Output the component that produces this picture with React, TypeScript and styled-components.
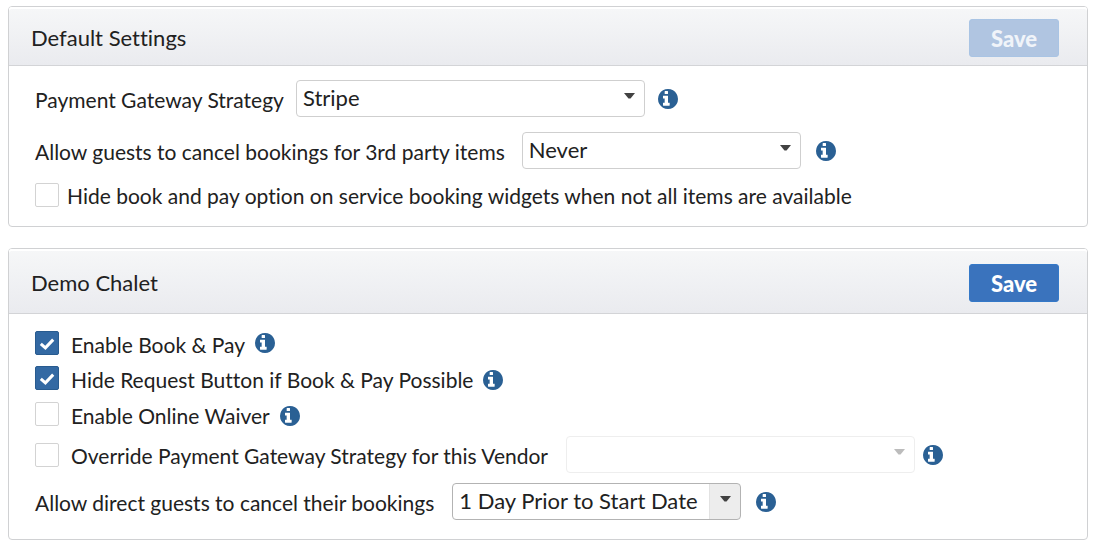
import React, { useState } from "react";
import styled, { createGlobalStyle, css } from "styled-components";

const GlobalStyle = createGlobalStyle`
  *, *::before, *::after { box-sizing: border-box; }
  body {
    margin: 0;
    background: #fff;
    color: #212121;
    font-family: Lato, "Liberation Sans", sans-serif;
    font-size: 22px;
    line-height: 28px;
    font-variant-ligatures: none;
  }
`;

const Page = styled.main`
  display: flex;
  flex-direction: column;
  gap: 21px;
  padding: 6px 7px 4px 8px;
`;

const Card = styled.section`
  border: 1px solid #d0d1d3;
  border-radius: 4px;
  background: #fff;
`;

const CardHeader = styled.header<{ $tall?: boolean }>`
  display: flex;
  align-items: center;
  justify-content: space-between;
  height: ${(p) => (p.$tall ? 65 : 59)}px;
  padding: 4px 28px 0 22px;
  border-bottom: 1px solid #d3d4d7;
  border-radius: 3px 3px 0 0;
  background: linear-gradient(#f6f7f8, #eaebef);
  box-shadow: inset 0 2px 0 #fff;
`;

const Title = styled.h2`
  margin: 0;
  font-size: 22px;
  font-weight: 400;
`;

const SaveButton = styled.button`
  width: 90px;
  height: 38px;
  padding: 2px 0 0;
  border: 1px solid #3579c8;
  border-radius: 3px;
  background: #3a73bd;
  color: #fff;
  font: 900 22px/28px Lato, "Liberation Sans", sans-serif;
  cursor: pointer;

  &:disabled {
    border-color: #a9c4e4;
    background: #b0c5e1;
    color: #f0f4f9;
    cursor: default;
  }
`;

const CardBody = styled.div<{ $top: number; $bottom: number }>`
  display: flex;
  flex-direction: column;
  align-items: flex-start;
  padding: ${(p) => p.$top}px 26px ${(p) => p.$bottom}px;
`;

const Row = styled.div<{ $height: number; $gap?: number }>`
  display: flex;
  align-items: center;
  height: ${(p) => p.$height}px;
  margin-top: ${(p) => p.$gap ?? 0}px;
`;

const Label = styled.label<{ $before?: number; $after?: number }>`
  padding-top: 2px;
  margin-left: ${(p) => p.$before ?? 0}px;
  margin-right: ${(p) => p.$after ?? 0}px;
  font-size: 21px;
  white-space: nowrap;
`;

const TickLabel = styled(Label)`
  padding-top: 4px;
`;

const SelectBox = styled.div<{ $width: number; $split?: boolean; $off?: boolean }>`
  position: relative;
  width: ${(p) => p.$width}px;
  height: 37px;
  color: #424242;
  ${(p) =>
    p.$off &&
    css`
      opacity: 0.35;
    `}

  select {
    appearance: none;
    display: block;
    width: 100%;
    height: 100%;
    padding: 0 40px 2px 6px;
    border: 1px solid ${(p) => (p.$split ? "#b3b3b3" : "#cfcfcf")};
    border-radius: 4px;
    background: ${(p) =>
      p.$split ? "linear-gradient(to left, #ededed 30px, #e2e2e2 30px, #e2e2e2 31px, #fff 31px)" : "#fff"};
    color: #212121;
    opacity: 1;
    font: inherit;
    font-variant-ligatures: none;
  }

  svg {
    position: absolute;
    top: 13px;
    right: 10px;
    pointer-events: none;
  }
`;

const Tick = styled.span`
  position: relative;
  display: block;
  width: 24px;
  height: 24px;

  input {
    appearance: none;
    display: block;
    width: 24px;
    height: 24px;
    margin: 0;
    border: 1px solid #d3d3d3;
    border-radius: 2px;
    background: #fff;
  }

  input:checked {
    border-color: #285b8f;
    background: #3369a3;
  }

  svg {
    position: absolute;
    top: 0;
    left: 0;
    pointer-events: none;
  }
`;

const InfoButton = styled.button<{ $before: number; $low?: boolean }>`
  display: flex;
  margin: 0 0 0 ${(p) => p.$before}px;
  padding: ${(p) => (p.$low ? 4 : 0)}px 0 0;
  border: 0;
  background: none;
  color: #2a6094;
  cursor: help;
`;

function Info({ before, low }: { before: number; low?: boolean }) {
  return (
    <InfoButton type="button" aria-label="More information" $before={before} $low={low}>
      <svg width="20" height="20" viewBox="128 128 1536 1536" aria-hidden="true">
        <path
          fill="currentColor"
          d="M1024 1376v-160q0-14-9-23t-23-9h-96v-512q0-14-9-23t-23-9h-320q-14 0-23 9t-9 23v160q0 14 9 23t23 9h96v320h-96q-14 0-23 9t-9 23v160q0 14 9 23t23 9h448q14 0 23-9t9-23zM896 480v-160q0-14-9-23t-23-9h-192q-14 0-23 9t-9 23v160q0 14 9 23t23 9h192q14 0 23-9t9-23zM1664 896q0 209-103 385.5t-279.5 279.5-385.5 103-385.5-103-279.5-279.5-103-385.5 103-385.5 279.5-279.5 385.5-103 385.5 103 279.5 279.5 103 385.5z"
        />
      </svg>
    </InfoButton>
  );
}

function Checkbox({ id, initial = false }: { id: string; initial?: boolean }) {
  const [checked, setChecked] = useState(initial);
  return (
    <Tick>
      <input id={id} type="checkbox" checked={checked} onChange={(e) => setChecked(e.target.checked)} />
      {checked && (
        <svg width="24" height="24" viewBox="0 0 24 24" aria-hidden="true">
          <path d="M5.8 12.8 10.4 16.9 18.2 8.6" fill="none" stroke="#fff" strokeWidth="3" />
        </svg>
      )}
    </Tick>
  );
}

type DropdownProps = {
  id: string;
  width: number;
  options: string[];
  split?: boolean;
  disabled?: boolean;
  label?: string;
};

function Dropdown({ id, width, options, split, disabled, label }: DropdownProps) {
  return (
    <SelectBox $width={width} $split={split} $off={disabled}>
      <select id={id} disabled={disabled} aria-label={label}>
        {options.map((o) => (
          <option key={o}>{o}</option>
        ))}
      </select>
      <svg width="11" height="6" viewBox="0 0 11 6" aria-hidden="true">
        <path d="M0 0H11L6.5 5.5H4.5Z" fill="currentColor" />
      </svg>
    </SelectBox>
  );
}

export default function App() {
  return (
    <>
      <GlobalStyle />
      <Page>
        <Card>
          <CardHeader>
            <Title>Default Settings</Title>
            <SaveButton type="button" disabled>
              Save
            </SaveButton>
          </CardHeader>
          <CardBody $top={14} $bottom={19}>
            <Row $height={37}>
              <Label htmlFor="gateway" $after={12}>
                Payment Gateway Strategy
              </Label>
              <Dropdown id="gateway" width={349} options={["Stripe", "PayPal"]} />
              <Info before={13} />
            </Row>
            <Row $height={37} $gap={15}>
              <Label htmlFor="third-party" $after={17}>
                Allow guests to cancel bookings for 3rd party items
              </Label>
              <Dropdown id="third-party" width={279} options={["Never", "Always"]} />
              <Info before={15} />
            </Row>
            <Row $height={24} $gap={14}>
              <Checkbox id="hide-book" />
              <Label htmlFor="hide-book" $before={8}>
                Hide book and pay option on service booking widgets when not all items are available
              </Label>
            </Row>
          </CardBody>
        </Card>

        <Card>
          <CardHeader $tall>
            <Title>Demo Chalet</Title>
            <SaveButton type="button">Save</SaveButton>
          </CardHeader>
          <CardBody $top={17} $bottom={19}>
            <Row $height={24}>
              <Checkbox id="enable-book" initial />
              <TickLabel htmlFor="enable-book" $before={12}>
                Enable Book &amp; Pay
              </TickLabel>
              <Info before={10} />
            </Row>
            <Row $height={24} $gap={11}>
              <Checkbox id="hide-request" initial />
              <TickLabel htmlFor="hide-request" $before={12}>
                Hide Request Button if Book &amp; Pay Possible
              </TickLabel>
              <Info before={10} low />
            </Row>
            <Row $height={24} $gap={12}>
              <Checkbox id="waiver" />
              <TickLabel htmlFor="waiver" $before={12}>
                Enable Online Waiver
              </TickLabel>
              <Info before={10} low />
            </Row>
            <Row $height={37} $gap={10}>
              <Checkbox id="override" />
              <Label htmlFor="override" $before={12} $after={18}>
                Override Payment Gateway Strategy for this Vendor
              </Label>
              <Dropdown
                id="override-gateway"
                label="Payment gateway for this vendor"
                width={349}
                options={[""]}
                disabled
              />
              <Info before={8} />
            </Row>
            <Row $height={37} $gap={10}>
              <Label htmlFor="direct" $after={18}>
                Allow direct guests to cancel their bookings
              </Label>
              <Dropdown id="direct" width={289} options={["1 Day Prior to Start Date", "Never"]} split />
              <Info before={15} />
            </Row>
          </CardBody>
        </Card>
      </Page>
    </>
  );
}
